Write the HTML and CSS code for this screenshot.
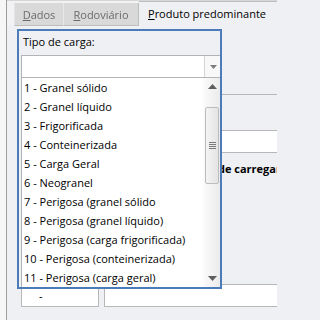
FILE: index.html
```html
<!DOCTYPE html>
<html lang="pt">
<head>
<meta charset="utf-8">
<title>Tipo de carga</title>
<link rel="stylesheet" href="styles.css">
</head>
<body>
<div class="window">
  <div class="edge"></div>
  <div class="main">
    <div class="tabs">
      <div class="tab inactive dados"><span class="blur"><u>D</u>ados</span></div>
      <div class="tab inactive rodo"><span class="blur"><u>R</u>odoviário</span></div>
      <div class="tab active"><u>P</u>roduto predominante</div>
    </div>
    <div class="panel">
      <div class="rule"></div>
      <div class="field-white"></div>
      <div class="bold-label">de carregamento</div>
      <div class="boxes">
        <div class="box small">-</div>
        <div class="box wide"></div>
      </div>
    </div>
  </div>

  <div class="popup">
    <div class="pop-label">Tipo de carga:</div>
    <div class="combo">
      <div class="combo-text"></div>
      <div class="combo-btn">
        <svg width="7" height="4" viewBox="0 0 7 4"><polygon points="0,0 7,0 3.5,4" fill="#7d7d7d"/></svg>
      </div>
    </div>
    <div class="list">
      <ul class="items">
        <li>1 - Granel sólido</li>
        <li>2 - Granel líquido</li>
        <li>3 - Frigorificada</li>
        <li>4 - Conteinerizada</li>
        <li>5 - Carga Geral</li>
        <li>6 - Neogranel</li>
        <li>7 - Perigosa (granel sólido</li>
        <li>8 - Perigosa (granel líquido)</li>
        <li>9 - Perigosa (carga frigorificada)</li>
        <li>10 - Perigosa (conteinerizada)</li>
        <li>11 - Perigosa (carga geral)</li>
      </ul>
      <div class="scrollbar">
        <div class="sb-arrow">
          <svg width="9" height="5" viewBox="0 0 9 5"><polygon points="0,5 9,5 4.5,0" fill="#5e5e5e"/></svg>
        </div>
        <div class="thumb">
          <div class="grip"><i></i><i></i><i></i><i></i></div>
        </div>
        <div class="sb-space"></div>
        <div class="sb-arrow">
          <svg width="9" height="5" viewBox="0 0 9 5"><polygon points="0,0 9,0 4.5,5" fill="#5e5e5e"/></svg>
        </div>
      </div>
    </div>
  </div>
</div>
</body>
</html>
```

FILE: styles.css
```css
* { box-sizing: border-box; }
html, body { margin: 0; padding: 0; }
body {
  width: 277px;
  height: 320px;
  overflow: hidden;
  font-family: "Open Sans", "Noto Sans", sans-serif;
  font-size: 11px;
  color: #000;
  background: #eff0f4;
}
.window {
  position: relative;
  display: flex;
  width: 277px;
  height: 320px;
  overflow: hidden;
  background: #eff0f4;
}
.edge {
  width: 7px;
  flex: none;
  background: #f6f6f6;
  border-right: 1px solid #9d9d9d;
}
.main {
  flex: 1;
  display: flex;
  flex-direction: column;
  min-width: 0;
}
.tabs {
  height: 26px;
  flex: none;
  display: flex;
  align-items: flex-end;
  padding-left: 7px;
  border-top: 1px solid #d6d6d6;
  background: #f2f2f4;
}
.tab {
  display: flex;
  align-items: center;
}
.inactive {
  height: 23px;
  justify-content: center;
  background: #d9d9d9;
  border-bottom: 1px solid #bdbdbd;
  color: #6a6a6a;
}
.inactive .blur { filter: blur(0.45px); }
.dados { width: 50px; border-left: 1px solid #e4e4e4; border-right: 1px solid #e8e8e8; }
.rodo { width: 75px; border-right: 1px solid #bdbdbd; }
.active {
  height: 25px;
  flex: 1;
  margin-right: -4px;
  padding-left: 9px;
  padding-bottom: 1px;
  background: #eff0f4;
  border-top: 1px solid #bdbdbd;
}
.panel {
  flex: 1;
  display: flex;
  flex-direction: column;
  padding-left: 14px;
}
.rule {
  margin-top: 68px;
  height: 1px;
  background: #b7b7b7;
  margin-right: -4px;
}
.field-white {
  margin-top: 35px;
  height: 23px;
  background: #fff;
  border-top: 1px solid #b7b7b7;
  border-bottom: 1px solid #b7b7b7;
  margin-right: -4px;
}
.bold-label {
  margin-top: 8px;
  height: 16px;
  line-height: 16px;
  padding-left: 197px;
  font-weight: 700;
  white-space: nowrap;
}
.boxes {
  margin-top: 107px;
  display: flex;
  gap: 5px;
  margin-right: -6px;
}
.box {
  height: 23px;
  background: #fff;
  border: 1px solid #b7b7b7;
  line-height: 21px;
}
.small { width: 78px; padding-left: 17px; }
.wide { flex: 1; }

.popup {
  position: absolute;
  left: 17px;
  top: 29px;
  width: 205px;
  height: 260px;
  border: 2px solid #4b7cb9;
  background: #eff0f4;
  display: flex;
  flex-direction: column;
}
.pop-label {
  height: 24px;
  padding: 3px 0 0 4px;
  line-height: 16px;
}
.combo {
  margin-left: 2px;
  height: 23px;
  display: flex;
  background: #fff;
  border: 1px solid #b4b4b4;
  border-right: none;
}
.combo-text { flex: 1; }
.combo-btn {
  width: 16px;
  border-left: 1px solid #d3d3d3;
  background: #f8f8f8;
  display: flex;
  align-items: center;
  justify-content: center;
}
.combo-btn svg { display: block; margin-left: 1px; }
.list {
  margin-left: 2px;
  height: 209px;
  display: flex;
  background: #fff;
  border-left: 1px solid #b4b4b4;
}
.items {
  flex: 1;
  margin: 0;
  padding: 0 0 0 2px;
  list-style: none;
  white-space: nowrap;
  overflow: hidden;
}
.items li {
  height: 19px;
  line-height: 19px;
}
.scrollbar {
  width: 17px;
  flex: none;
  display: flex;
  flex-direction: column;
  background: linear-gradient(to right, #fbfbfb, #ebebeb);
}
.sb-arrow {
  height: 17px;
  display: flex;
  align-items: center;
  justify-content: center;
}
.sb-arrow svg { display: block; margin-left: 1px; }
.thumb {
  margin: 12px 1px 0 2px;
  height: 77px;
  border: 1px solid #bcbcbc;
  border-radius: 2px;
  background: linear-gradient(to right, #f4f4f4, #e4e4e4);
  display: flex;
  align-items: center;
  justify-content: center;
}
.grip {
  display: flex;
  flex-direction: column;
  gap: 1px;
}
.grip i {
  display: block;
  width: 7px;
  height: 1px;
  background: #7a7a7a;
}
.sb-space { flex: 1; }
```
